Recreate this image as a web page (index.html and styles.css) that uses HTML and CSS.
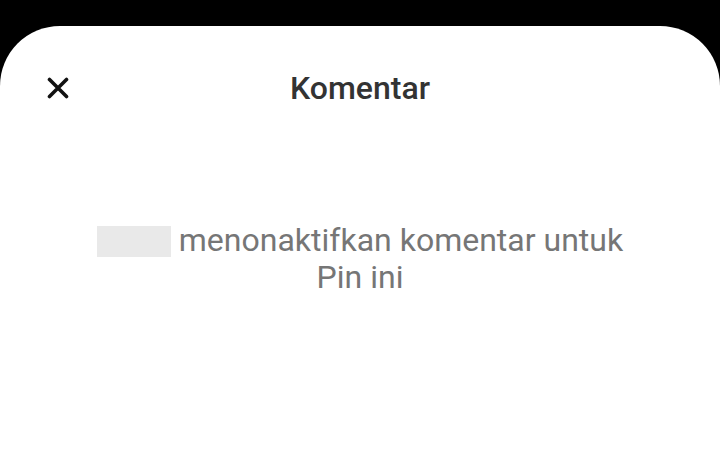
FILE: index.html
```html
<!DOCTYPE html>
<html lang="id">
<head>
  <meta charset="UTF-8" />
  <meta name="viewport" content="width=device-width, initial-scale=1.0" />
  <title>Komentar</title>
  <link rel="stylesheet" href="styles.css">
</head>
<body>
  <div class="sheet">
    <div class="sheet-header">
      <button class="close-btn" aria-label="Tutup">
        <svg width="22" height="22" viewBox="0 0 22 22">
          <path d="M2.5 2.5 L19.5 19.5 M19.5 2.5 L2.5 19.5" stroke="#111" stroke-width="3.6" stroke-linecap="round" fill="none" />
        </svg>
      </button>
      <h1 class="title">Komentar</h1>
      <div class="spacer"></div>
    </div>

    <p class="message">
      <span class="redacted"></span> menonaktifkan komentar untuk Pin ini
    </p>
  </div>
</body>
</html>
```

FILE: styles.css
```css
* {
  margin: 0;
  padding: 0;
  box-sizing: border-box;
}

html, body {
  height: 100%;
}

body {
  background: #000;
  font-family: 'Roboto', 'Liberation Sans', sans-serif;
  padding-top: 26px;
  overflow: hidden;
}

.sheet {
  background: #fff;
  border-radius: 60px 60px 0 0;
  height: 100%;
}

.sheet-header {
  display: grid;
  grid-template-columns: 80px 1fr 80px;
  align-items: center;
  padding: 42px 38px 0;
  height: 82px;
}

.close-btn {
  width: 40px;
  height: 40px;
  border: none;
  background: none;
  display: flex;
  align-items: center;
  justify-content: center;
  cursor: pointer;
}

.title {
  text-align: center;
  font-size: 32px;
  font-weight: 500;
  color: #333;
}

.message {
  margin: 114px auto 0;
  width: 560px;
  text-align: center;
  font-size: 32px;
  line-height: 37px;
  color: #767676;
}

.redacted {
  display: inline-block;
  width: 74px;
  height: 31px;
  background: #e9e9e9;
  vertical-align: -6px;
}
```
